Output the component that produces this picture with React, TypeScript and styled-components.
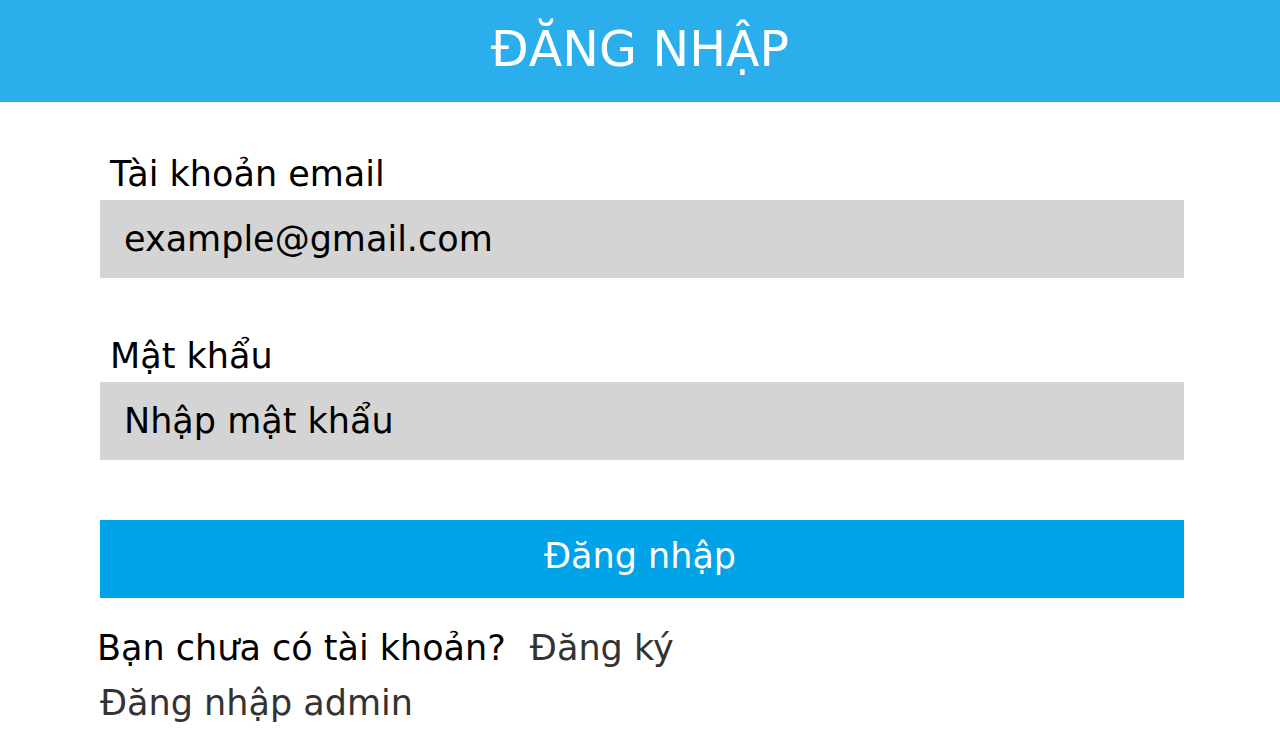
import React from "react";
import styled, { createGlobalStyle } from "styled-components";

const GlobalStyle = createGlobalStyle`
  html, body {
    margin: 0;
    padding: 0;
    background: #ffffff;
    font-family: "DejaVu Sans", "Noto Sans", sans-serif;
  }
  * { box-sizing: border-box; }
`;

const Page = styled.div`
  width: 1280px;
  min-height: 756px;
  background: #ffffff;
  display: flex;
  flex-direction: column;
`;

const Header = styled.header`
  height: 102px;
  background: #2baeec;
  display: flex;
  align-items: center;
  justify-content: center;
  padding-bottom: 4px;
`;

const Title = styled.h1`
  margin: 0;
  font-family: "DejaVu Sans", sans-serif;
  font-weight: normal;
  font-size: 49px;
  line-height: normal;
  color: #ffffff;
`;

const Form = styled.div`
  display: flex;
  flex-direction: column;
  padding: 52px 96px 0 100px;
`;

const Field = styled.div<{ $top?: number }>`
  display: flex;
  flex-direction: column;
  margin-top: ${(p) => p.$top ?? 0}px;
`;

const Label = styled.label`
  font-size: 35px;
  line-height: 40px;
  color: #000000;
  margin-left: 10px;
  margin-bottom: 6px;
`;

const Input = styled.div`
  height: 78px;
  background: #d4d4d4;
  display: flex;
  align-items: center;
  padding-left: 24px;
  font-size: 35px;
  color: #000000;
`;

const Button = styled.button`
  margin-top: 60px;
  height: 78px;
  border: none;
  background: #00a2e8;
  color: #ffffff;
  font-family: "DejaVu Sans", sans-serif;
  font-size: 35px;
  display: flex;
  align-items: center;
  justify-content: center;
  padding: 0 4px 6px 0;
`;

const Row = styled.div<{ $top: number; $indent: number }>`
  display: flex;
  align-items: baseline;
  margin-top: ${(p) => p.$top}px;
  margin-left: ${(p) => p.$indent}px;
  font-size: 35px;
  line-height: 41px;
`;

const Question = styled.span`
  color: #000000;
`;

const Link = styled.span<{ $gap?: number }>`
  color: #333333;
  margin-left: ${(p) => p.$gap ?? 0}px;
`;

export default function App() {
  return (
    <Page>
      <GlobalStyle />
      <Header>
        <Title>ĐĂNG NHẬP</Title>
      </Header>
      <Form>
        <Field>
          <Label>Tài khoản email</Label>
          <Input>example@gmail.com</Input>
        </Field>
        <Field $top={58}>
          <Label>Mật khẩu</Label>
          <Input>Nhập mật khẩu</Input>
        </Field>
        <Button>Đăng nhập</Button>
        <Row $top={30} $indent={-3}>
          <Question>Bạn chưa có tài khoản?</Question>
          <Link $gap={24}>Đăng ký</Link>
        </Row>
        <Row $top={14} $indent={0}>
          <Link>Đăng nhập admin</Link>
        </Row>
      </Form>
    </Page>
  );
}
